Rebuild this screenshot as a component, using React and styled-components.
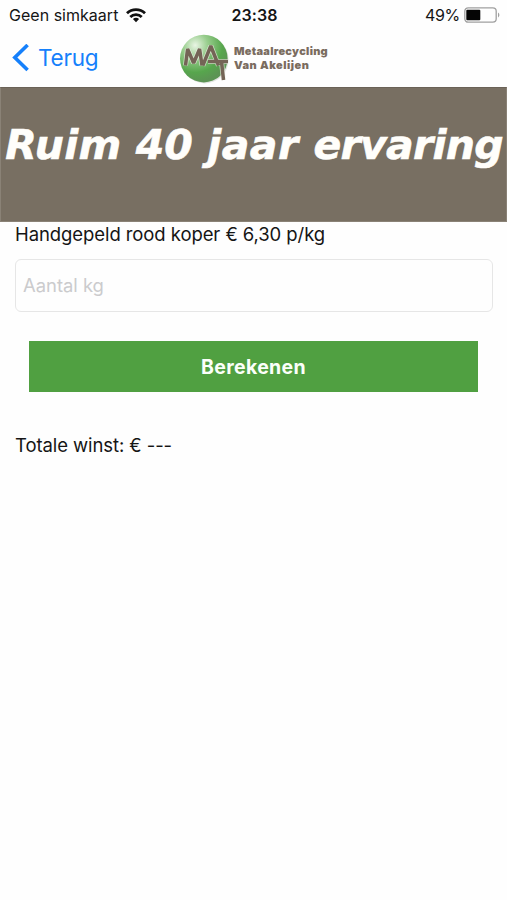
import React from 'react';
import styled, { createGlobalStyle } from 'styled-components';

const GlobalStyle = createGlobalStyle`
  * {
    box-sizing: border-box;
  }

  body {
    margin: 0;
    background: #fefefe;
    color: #151515;
    font-family: Inter, 'Liberation Sans', sans-serif;
  }
`;

const Screen = styled.div`
  min-height: 900px;
  overflow: hidden;
`;

const StatusBar = styled.div`
  height: 30px;
  padding: 0 7px 0 9px;
  display: grid;
  grid-template-columns: 1fr auto 1fr;
  align-items: center;
  font-size: 16px;
  line-height: 30px;
`;

const StatusSide = styled.div`
  display: flex;
  align-items: center;
  justify-content: ${({ $end }) => ($end ? 'flex-end' : 'flex-start')};
  gap: ${({ $end }) => ($end ? '4px' : '8px')};
`;

const Carrier = styled.span`
  letter-spacing: 0.02px;
`;

const Clock = styled.span`
  font-weight: 600;
  letter-spacing: 0.1px;
`;

const Percentage = styled.span`
  letter-spacing: -0.3px;
`;

const NavBar = styled.div`
  height: 57px;
  padding: 0 179px 2px 12px;
  display: flex;
  align-items: center;
  justify-content: space-between;
`;

const BackButton = styled.button`
  padding: 0;
  border: 0;
  background: none;
  display: flex;
  align-items: center;
  gap: 8px;
  color: #1580fb;
  font-family: inherit;
  font-size: 22.5px;
  letter-spacing: -0.2px;
  line-height: 28px;
`;

const Logo = styled.div`
  display: flex;
  align-items: center;
  gap: 3px;
`;

const LogoName = styled.div`
  padding-top: 2px;
  color: #7a6c5f;
  font-size: 11px;
  font-weight: 900;
  line-height: 13.5px;
  white-space: nowrap;
`;

const LogoLine = styled.div`
  letter-spacing: ${({ $spacing }) => $spacing};
`;

const Banner = styled.div`
  height: 135px;
  padding: 33px 0 0 1px;
  background: #786f62;
  border: 1px solid #8a8276;
  border-top-color: #6a6257;
  color: #fffefb;
  font-family: 'DejaVu Sans', sans-serif;
  font-size: 41px;
  font-style: italic;
  font-weight: 700;
  line-height: 48px;
  text-align: center;
  white-space: nowrap;
  -webkit-text-stroke: 0.6px #fffefb;
`;

const BannerWord = styled.span`
  letter-spacing: ${({ $spacing }) => $spacing};
`;

const Form = styled.div`
  padding: 0 14px 0 15px;
`;

const Text = styled.div`
  font-size: 18.5px;
  line-height: 24px;
  letter-spacing: -0.08px;
`;

const Input = styled.input`
  width: 100%;
  height: 53px;
  margin-top: 13px;
  padding: 0 7px 1px;
  display: block;
  background: #fefefe;
  border: 1.5px solid #e6e6e6;
  border-radius: 6px;
  font-family: inherit;
  font-size: 18.4px;

  &::placeholder {
    color: #cbcbcd;
    opacity: 1;
  }
`;

const Button = styled.button`
  width: calc(100% - 29px);
  height: 51px;
  margin: 29px 15px 41px 14px;
  padding: 0;
  display: block;
  background: #50a041;
  border: 0;
  color: #fbfffa;
  font-family: inherit;
  font-size: 19.5px;
  font-weight: 700;
  letter-spacing: 0.35px;
`;

const WifiIcon = () => (
  <svg width="20" height="15" viewBox="0 0 20 15" fill="none" stroke="#111" strokeWidth="2.8">
    <path d="M1 5.2C6 0.3 14 0.3 19 5.2" />
    <path d="M4.3 8.9C7.4 5.9 12.6 5.9 15.7 8.9" />
    <path d="M10 14.2L6.9 11.1C8.6 9.4 11.4 9.4 13.1 11.1Z" fill="#111" stroke="none" />
  </svg>
);

const BatteryIcon = () => (
  <svg width="36" height="16" viewBox="0 0 36 16">
    <rect x="0.8" y="0.8" width="31.4" height="14.4" rx="3.4" fill="none" stroke="#a0a0a0" strokeWidth="1.3" />
    <rect x="2.3" y="2.7" width="14" height="10.6" rx="1" fill="#050505" />
    <path d="M34 5.6C35.8 6.3 35.8 9.7 34 10.4Z" fill="#a0a0a0" />
  </svg>
);

const BackIcon = () => (
  <svg width="18" height="28" viewBox="0 0 18 28" fill="none" stroke="#1580fb" strokeWidth="3.6">
    <path d="M15.6 1L2.8 13.5L15.6 26" />
  </svg>
);

const LogoMark = () => (
  <svg width="52" height="52" viewBox="0 0 52 52">
    <defs>
      <radialGradient id="globe" cx="32%" cy="22%" r="76%">
        <stop offset="0" stopColor="#e9f5e4" />
        <stop offset="0.35" stopColor="#98cd8d" />
        <stop offset="0.75" stopColor="#57a64d" />
        <stop offset="1" stopColor="#5c9454" />
      </radialGradient>
    </defs>
    <circle cx="25.8" cy="27.6" r="23.8" fill="#e3e5e2" />
    <circle cx="24.8" cy="26.6" r="23.8" fill="url(#globe)" />
    <g fill="none" strokeLinejoin="miter" strokeMiterlimit="2">
      <g stroke="#eef3e9" strokeOpacity="0.7" strokeWidth="5">
        <path d="M6.5 33.5L8.6 17L14.6 31L20.6 17L23 33.5" />
        <path d="M23.8 33.5L31.8 14L39.5 33.5M29 29.5H49M42.5 29.5L44.5 48" />
      </g>
      <g stroke="#746456" strokeWidth="3.5">
        <path d="M6.5 33.5L8.6 17L14.6 31L20.6 17L23 33.5" />
        <path d="M23.8 33.5L31.8 14L39.5 33.5M29 29.5H49M42.5 29.5L44.5 48" />
      </g>
    </g>
  </svg>
);

const App = () => (
  <>
    <GlobalStyle />
    <Screen>
      <StatusBar>
        <StatusSide>
          <Carrier>Geen simkaart</Carrier>
          <WifiIcon />
        </StatusSide>
        <Clock>23:38</Clock>
        <StatusSide $end>
          <Percentage>49%</Percentage>
          <BatteryIcon />
        </StatusSide>
      </StatusBar>
      <NavBar>
        <BackButton>
          <BackIcon />
          Terug
        </BackButton>
        <Logo>
          <LogoMark />
          <LogoName>
            <LogoLine $spacing="0.28px">Metaalrecycling</LogoLine>
            <LogoLine $spacing="0.5px">Van Akelijen</LogoLine>
          </LogoName>
        </Logo>
      </NavBar>
      <Banner>
        <BannerWord $spacing="0.2px">Ruim </BannerWord>
        <BannerWord $spacing="0">40 </BannerWord>
        <BannerWord $spacing="0.5px">jaar </BannerWord>
        <BannerWord $spacing="-0.75px">ervaring</BannerWord>
      </Banner>
      <Form>
        <Text>Handgepeld rood koper € 6,30 p/kg</Text>
        <Input placeholder="Aantal kg" />
        <Button>Berekenen</Button>
        <Text>Totale winst: € ---</Text>
      </Form>
    </Screen>
  </>
);

export default App;
